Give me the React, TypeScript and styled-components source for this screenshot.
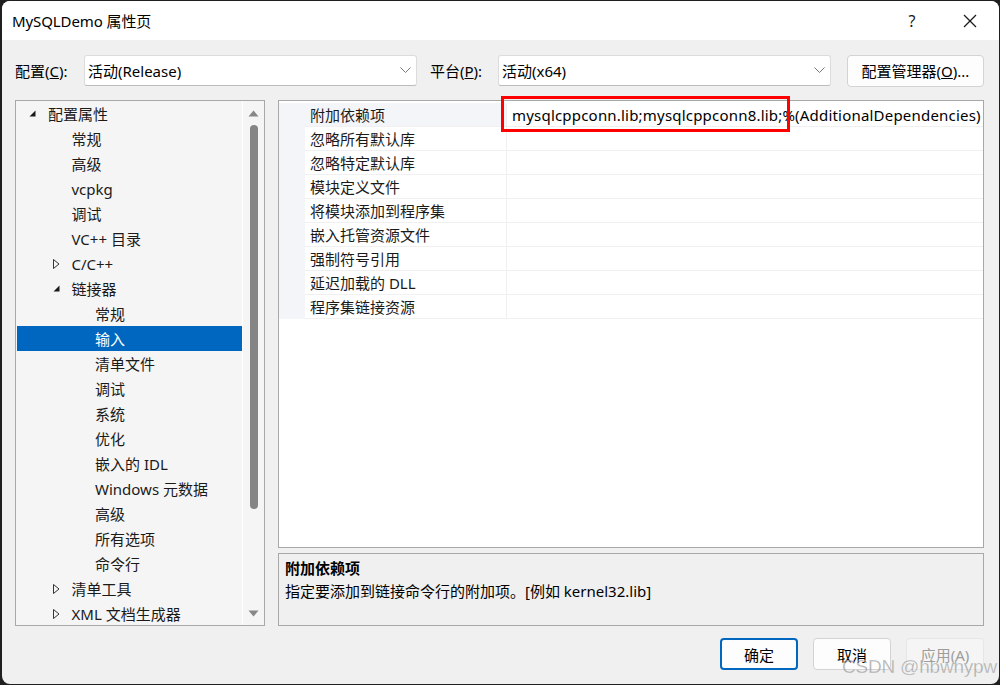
import React from "react";
import styled, { createGlobalStyle } from "styled-components";

const GlobalStyle = createGlobalStyle`
  html, body { margin: 0; padding: 0; }
  body {
    background: #1f1f1f;
    width: 1000px;
    height: 685px;
    overflow: hidden;
    font-family: "Noto Sans", "Noto Sans CJK SC", sans-serif;
    color: #000;
  }
`;

const Window = styled.div`
  position: relative;
  width: 997px;
  height: 683px;
  margin: 1px 1px 1px 2px;
  border-radius: 8px;
  overflow: hidden;
  background: #f0f0f0;
  display: flex;
  flex-direction: column;
  font-family: "Noto Sans", "Noto Sans CJK SC", sans-serif;
`;

const TitleBar = styled.div`
  height: 39px;
  background: #ffffff;
  display: flex;
  align-items: center;
  padding-left: 10px;
  flex-shrink: 0;
`;

const Title = styled.div`
  font-size: 15px;
  flex: 1;
  letter-spacing: -0.1px;
`;

const TitleButton = styled.div`
  width: 58px;
  height: 39px;
  display: flex;
  align-items: center;
  justify-content: center;
  font-size: 16px;
  color: #1a1a1a;
`;

const Body = styled.div`
  flex: 1;
  display: flex;
  flex-direction: column;
  padding: 15px 15px 0 13px;
`;

const ConfigRow = styled.div`
  display: flex;
  align-items: center;
  height: 31px;
`;

const FieldLabel = styled.div<{ $w: number }>`
  width: ${(p) => p.$w}px;
  font-size: 15px;
  flex-shrink: 0;
`;

const Select = styled.div`
  width: 333px;
  height: 31px;
  box-sizing: border-box;
  background: #ffffff;
  border: 1px solid #dcdcdc;
  border-bottom-color: #bcbcbc;
  border-radius: 3px;
  display: flex;
  align-items: center;
  padding-left: 3px;
  font-size: 15px;
  flex-shrink: 0;
`;

const SelectText = styled.div`
  flex: 1;
`;

const Chevron = styled.div`
  width: 22px;
  display: flex;
  align-items: center;
  justify-content: center;
`;

const Spacer = styled.div<{ $w: number }>`
  width: ${(p) => p.$w}px;
  flex-shrink: 0;
`;

const Button = styled.div<{ $primary?: boolean; $disabled?: boolean; $w: number }>`
  width: ${(p) => p.$w}px;
  height: 32px;
  box-sizing: border-box;
  border-radius: 4px;
  background: ${(p) => (p.$disabled ? "#f5f5f5" : "#fdfdfd")};
  border: ${(p) => (p.$primary ? "2px solid #0067c0" : p.$disabled ? "1px solid #e6e6e6" : "1px solid #d3d3d3")};
  color: ${(p) => (p.$disabled ? "#9d9d9d" : "#000")};
  display: flex;
  align-items: center;
  justify-content: center;
  font-size: 15px;
  flex-shrink: 0;
`;

const Main = styled.div`
  display: flex;
  gap: 13px;
  margin-top: 14px;
  height: 526px;
`;

const Tree = styled.div`
  width: 250px;
  box-sizing: border-box;
  border: 1px solid #a8a8a8;
  background: #f5f5f5;
  display: flex;
  flex-shrink: 0;
`;

const TreeList = styled.div`
  width: 225px;
  padding: 0 0 0 1px;
  border-right: 1px solid #ffffff;
`;

const TreeRow = styled.div<{ $level: number; $selected?: boolean }>`
  height: 25px;
  display: flex;
  align-items: center;
  padding-left: ${(p) => 10 + p.$level * 23.5}px;
  font-size: 15px;
  background: ${(p) => (p.$selected ? "#0067c0" : "transparent")};
  color: ${(p) => (p.$selected ? "#ffffff" : "#1a1a1a")};
  white-space: nowrap;
`;

const Twisty = styled.div`
  width: 21px;
  height: 25px;
  display: flex;
  align-items: center;
  padding-left: 2px;
  box-sizing: border-box;
  flex-shrink: 0;
`;

const ScrollBar = styled.div`
  flex: 1;
  display: flex;
  flex-direction: column;
  align-items: center;
  padding: 9px 0 8px;
`;

const Thumb = styled.div`
  width: 8px;
  height: 384px;
  border-radius: 4px;
  background: #858585;
  margin: 8px 0 auto;
`;

const RightCol = styled.div`
  flex: 1;
  display: flex;
  flex-direction: column;
  gap: 5px;
`;

const Grid = styled.div`
  position: relative;
  height: 448px;
  box-sizing: border-box;
  border: 1px solid #a8a8a8;
  background: #ffffff;
  padding-top: 2px;
`;

const GridRow = styled.div`
  display: flex;
  height: 24px;
`;

const Gutter = styled.div`
  width: 26px;
  background: #f3f5f9;
  flex-shrink: 0;
`;

const NameCell = styled.div<{ $active?: boolean }>`
  width: 202px;
  flex-shrink: 0;
  box-sizing: border-box;
  padding-left: 5px;
  display: flex;
  align-items: center;
  font-size: 15px;
  color: #1a1a1a;
  background: ${(p) => (p.$active ? "#f3f5f9" : "#ffffff")};
  border-bottom: 1px solid #f0f0f0;
  border-right: 1px solid #f0f0f0;
`;

const ValueCell = styled.div`
  flex: 1;
  box-sizing: border-box;
  padding-left: 5px;
  display: flex;
  align-items: center;
  font-size: 15px;
  letter-spacing: 0.2px;
  white-space: nowrap;
  overflow: hidden;
  border-bottom: 1px solid #f0f0f0;
`;

const Highlight = styled.div`
  position: absolute;
  left: 222px;
  top: -5px;
  width: 289px;
  height: 36px;
  box-sizing: border-box;
  border: 3px solid #ff0000;
`;

const Desc = styled.div`
  flex: 1;
  box-sizing: border-box;
  border: 1px solid #a8a8a8;
  padding: 3px 6px;
  font-size: 15px;
  line-height: 23px;
`;

const DescTitle = styled.div`
  font-weight: bold;
`;

const Footer = styled.div`
  display: flex;
  justify-content: flex-end;
  gap: 15px;
  margin-top: 12px;
`;

const Watermark = styled.div`
  position: absolute;
  right: 2px;
  bottom: 6px;
  font-family: "Liberation Sans", Arial, sans-serif;
  font-size: 19px;
  color: rgba(120, 120, 120, 0.55);
  -webkit-text-stroke: 0.3px rgba(255, 255, 255, 0.6);
  letter-spacing: -0.2px;
  pointer-events: none;
`;

const ExpandedIcon = () => (
  <svg width="7" height="7" viewBox="0 0 7 7">
    <polygon points="6.5,0.5 6.5,6.5 0.5,6.5" fill="#1a1a1a" />
  </svg>
);

const CollapsedIcon = () => (
  <svg width="7" height="10" viewBox="0 0 7 10">
    <polygon points="0.5,0.5 6,5 0.5,9.5" fill="none" stroke="#333" strokeWidth="1" />
  </svg>
);

const ChevronIcon = () => (
  <svg width="11" height="7" viewBox="0 0 11 7">
    <polyline points="0.5,0.5 5.5,5.5 10.5,0.5" fill="none" stroke="#777" strokeWidth="1" />
  </svg>
);

const CloseIcon = () => (
  <svg width="14" height="14" viewBox="0 0 14 14">
    <line x1="1" y1="1" x2="13" y2="13" stroke="#1a1a1a" strokeWidth="1.2" />
    <line x1="13" y1="1" x2="1" y2="13" stroke="#1a1a1a" strokeWidth="1.2" />
  </svg>
);

const ArrowUp = () => (
  <svg width="11" height="7" viewBox="0 0 11 7">
    <polygon points="5.5,0.5 10.5,6.5 0.5,6.5" fill="#888" />
  </svg>
);

const ArrowDown = () => (
  <svg width="11" height="7" viewBox="0 0 11 7">
    <polygon points="0.5,0.5 10.5,0.5 5.5,6.5" fill="#888" />
  </svg>
);

type TreeItem = { label: string; level: number; state?: "open" | "closed"; selected?: boolean };

const treeItems: TreeItem[] = [
  { label: "配置属性", level: 0, state: "open" },
  { label: "常规", level: 1 },
  { label: "高级", level: 1 },
  { label: "vcpkg", level: 1 },
  { label: "调试", level: 1 },
  { label: "VC++ 目录", level: 1 },
  { label: "C/C++", level: 1, state: "closed" },
  { label: "链接器", level: 1, state: "open" },
  { label: "常规", level: 2 },
  { label: "输入", level: 2, selected: true },
  { label: "清单文件", level: 2 },
  { label: "调试", level: 2 },
  { label: "系统", level: 2 },
  { label: "优化", level: 2 },
  { label: "嵌入的 IDL", level: 2 },
  { label: "Windows 元数据", level: 2 },
  { label: "高级", level: 2 },
  { label: "所有选项", level: 2 },
  { label: "命令行", level: 2 },
  { label: "清单工具", level: 1, state: "closed" },
  { label: "XML 文档生成器", level: 1, state: "closed" },
];

const props: { name: string; value?: string }[] = [
  { name: "附加依赖项", value: "mysqlcppconn.lib;mysqlcppconn8.lib;%(AdditionalDependencies)" },
  { name: "忽略所有默认库" },
  { name: "忽略特定默认库" },
  { name: "模块定义文件" },
  { name: "将模块添加到程序集" },
  { name: "嵌入托管资源文件" },
  { name: "强制符号引用" },
  { name: "延迟加载的 DLL" },
  { name: "程序集链接资源" },
];

export default function App() {
  return (
    <>
      <GlobalStyle />
      <Window>
        <TitleBar>
          <Title>MySQLDemo 属性页</Title>
          <TitleButton>?</TitleButton>
          <TitleButton>
            <CloseIcon />
          </TitleButton>
        </TitleBar>
        <Body>
          <ConfigRow>
            <FieldLabel $w={69}>
              配置(<u>C</u>):
            </FieldLabel>
            <Select>
              <SelectText>活动(Release)</SelectText>
              <Chevron>
                <ChevronIcon />
              </Chevron>
            </Select>
            <Spacer $w={13} />
            <FieldLabel $w={68}>
              平台(<u>P</u>):
            </FieldLabel>
            <Select>
              <SelectText>活动(x64)</SelectText>
              <Chevron>
                <ChevronIcon />
              </Chevron>
            </Select>
            <Spacer $w={16} />
            <Button $w={137}>
              配置管理器(<u>O</u>)...
            </Button>
          </ConfigRow>
          <Main>
            <Tree>
              <TreeList>
                {treeItems.map((it, i) => (
                  <TreeRow key={i} $level={it.level} $selected={it.selected}>
                    <Twisty>
                      {it.state === "open" && <ExpandedIcon />}
                      {it.state === "closed" && <CollapsedIcon />}
                    </Twisty>
                    {it.label}
                  </TreeRow>
                ))}
              </TreeList>
              <ScrollBar>
                <ArrowUp />
                <Thumb />
                <ArrowDown />
              </ScrollBar>
            </Tree>
            <RightCol>
              <Grid>
                {props.map((p, i) => (
                  <GridRow key={i}>
                    <Gutter />
                    <NameCell $active={i === 0}>{p.name}</NameCell>
                    <ValueCell>{p.value ?? ""}</ValueCell>
                  </GridRow>
                ))}
                <Highlight />
              </Grid>
              <Desc>
                <DescTitle>附加依赖项</DescTitle>
                <div>指定要添加到链接命令行的附加项。[例如 kernel32.lib]</div>
              </Desc>
            </RightCol>
          </Main>
          <Footer>
            <Button $w={78} $primary>
              确定
            </Button>
            <Button $w={78}>取消</Button>
            <Button $w={78} $disabled>
              应用(A)
            </Button>
          </Footer>
        </Body>
        <Watermark>CSDN @hbwhypw</Watermark>
      </Window>
    </>
  );
}
